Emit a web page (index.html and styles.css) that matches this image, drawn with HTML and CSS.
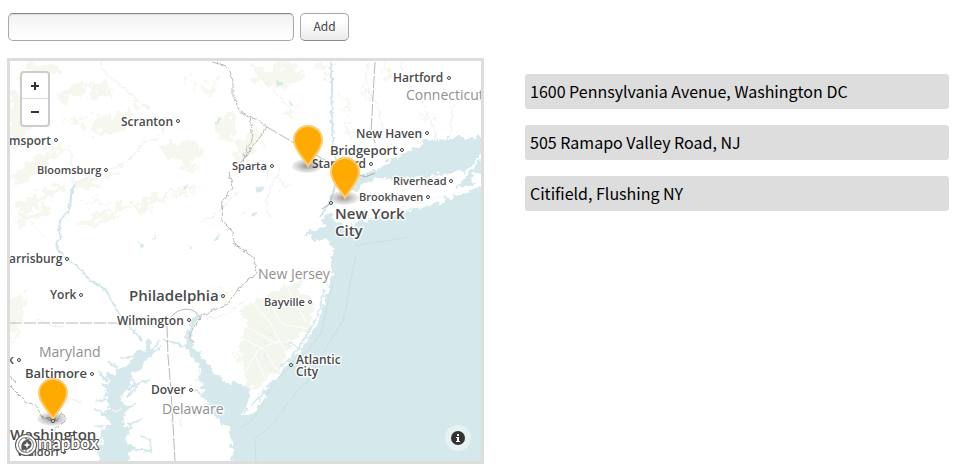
FILE: index.html
```html
<!DOCTYPE html>
<html lang="en">
<head>
<meta charset="utf-8">
<title>Address map</title>
<link rel="stylesheet" href="styles.css">
</head>
<body>
<form class="add-form">
  <input class="address-input" type="text" name="address" aria-label="Address">
  <button class="add-button" type="button">Add</button>
</form>
<main class="content">
  <section class="map" aria-label="Map">
    <svg class="map-canvas" viewBox="10 61 471 400" preserveAspectRatio="xMinYMin slice">
      <defs>
        <filter id="coast" x="-5%" y="-5%" width="110%" height="110%">
          <feTurbulence type="fractalNoise" baseFrequency="0.16" numOctaves="3" seed="4" result="n"/>
          <feDisplacementMap in="SourceGraphic" in2="n" scale="11" xChannelSelector="R" yChannelSelector="G"/>
        </filter>
        <filter id="rough" x="-5%" y="-5%" width="110%" height="110%">
          <feTurbulence type="fractalNoise" baseFrequency="0.12" numOctaves="3" seed="9" result="n"/>
          <feDisplacementMap in="SourceGraphic" in2="n" scale="24" xChannelSelector="R" yChannelSelector="G"/>
        </filter>
        <filter id="wiggle" x="-5%" y="-5%" width="110%" height="110%">
          <feTurbulence type="fractalNoise" baseFrequency="0.2" numOctaves="2" seed="2" result="n"/>
          <feDisplacementMap in="SourceGraphic" in2="n" scale="5" xChannelSelector="R" yChannelSelector="G"/>
        </filter>
        <radialGradient id="shade">
          <stop offset="0" stop-color="#000" stop-opacity=".42"/>
          <stop offset=".5" stop-color="#000" stop-opacity=".22"/>
          <stop offset="1" stop-color="#000" stop-opacity=".05"/>
        </radialGradient>
        <g id="pin">
          <ellipse cx="-1" cy="0" rx="15" ry="7" fill="url(#shade)"/>
          <path class="pin-shape" d="M0 0C-4 -8 -14 -16 -14 -26A14 14 0 0 1 14 -26C14 -16 4 -8 0 0Z"/>
        </g>
      </defs>
      <rect class="land" x="10" y="61" width="471" height="400"/>

      <g class="hills" filter="url(#rough)">
        <path d="M8 85L25 95L32 112L25 140L10 155ZM30 62L60 65L45 80L22 88ZM55 95L82 82L98 79L82 94L62 103ZM86 96L100 84L112 88L104 98ZM95 118L112 112L135 114L128 128L105 136L93 130ZM130 100L155 105L146 112ZM62 118L88 120L80 128ZM185 78L192 73L190 88ZM205 86L216 78L214 94L207 98ZM160 122L176 118L168 126ZM162 145L190 140L205 150L192 162L168 158ZM218 118L234 114L240 130L230 142L218 134ZM175 156L200 166L188 174ZM235 146L256 125L260 138L238 162Z"/>
        <path d="M12 175L48 150L72 146L40 169L14 190ZM72 180L124 168L118 176L78 188ZM15 208L60 182L68 186L22 214ZM77 222L100 214L120 204L132 209L104 219L86 231ZM132 204L175 190L212 184L170 196L140 211ZM20 218L50 204L55 208L24 228ZM80 201L110 201L105 204L80 204Z"/>
        <path d="M252 70L296 62L304 76L284 90L260 84ZM310 65L336 62L326 76ZM244 146L262 132L258 148L242 160ZM284 112L296 108L290 122ZM342 94L350 108L345 116ZM362 84L372 95L366 102ZM385 66L393 75L385 82ZM345 130L354 122L350 138ZM278 178L290 184L283 188ZM424 112L432 116L425 122ZM266 170L275 164L270 178Z"/>
        <path d="M10 300L26 290L22 318L14 335L10 345ZM235 355L242 350L240 362ZM70 400L82 397L77 408ZM198 366L206 376L202 392ZM218 286L232 298L224 302ZM172 418L184 414L180 430Z"/>
      </g>
      <path class="pine" filter="url(#coast)" d="M270 294L285 285L304 279L298 292L312 299L314 310L309 330L293 341L284 358L279 370L266 376L262 386L248 388L244 370L240 345L246 327L242 309L254 301Z"/>

      <g class="streams" filter="url(#wiggle)">
        <path d="M100 63C107 82 121 81 129 94C140 101 154 110 160 122C167 131 164 140 144 142C135 150 136 162 110 168C94 173 82 181 75 185"/>
        <path d="M67 145C76 151 66 161 75 185M370 63C362 73 365 90 378 106C381 122 382 136 395 148M402 62C398 80 420 93 423 104C430 120 437 127 435 142"/>
        <path d="M250 62C258 78 276 92 293 112M280 168C275 182 260 200 270 218M458 102C446 111 456 122 449 138M200 222C220 216 228 200 238 192M14 219C24 207 35 230 45 237"/>
        <path d="M36 320C46 318 51 330 63 326M244 300C228 315 222 319 203 317M256 326C274 337 284 344 294 348M264 340L266 366L282 376"/>
      </g>
      <g class="rivers" filter="url(#wiggle)">
        <path d="M75 185C68 193 73 203 68 212C55 222 60 230 61 239C48 248 67 257 74 264C86 272 87 282 99 285C109 291 114 306 121 318C130 323 135 334 142 341"/>
        <path d="M321 216C328 205 334 196 336 180L336 159C332 151 334 139 332 125C330 104 334 85 331 62"/>
      </g>
      <g class="ponds" filter="url(#wiggle)">
        <path d="M214 124L221 116L218 125ZM182 188L188 184L184 190ZM138 242L145 246L142 248ZM153 239L157 231L154 240ZM214 240L220 233L218 240ZM275 78L283 84L279 86ZM289 98L293 107L290 105ZM256 187L265 188L258 192ZM251 213L257 212L254 217ZM191 245L193 249L190 248ZM243 212L246 213L242 214Z"/>
      </g>

      <g class="water" filter="url(#coast)">
        <path d="M490 182L462 195L440 202L418 209L394 215L366 219L347 226L336 222L330 212L323 220L326 226L304 233L312 239L328 241L332 248L332 275L327 288L323 310L316 326L305 343L291 359L282 372L268 388L261 403L253 414L242 416L248 402L250 388L240 383L228 384L216 374L208 363L197 351L191 341L188 349L189 354L200 367L201 386L206 402L216 416L227 428L232 443L233 475L490 475Z"/>
        <path d="M490 137L471 138L455 136L435 141L424 140L411 150L401 156L390 159L380 168L367 173L356 179L351 186L356 192L364 183L370 183L375 178L391 180L407 178L430 177L450 173L464 172L474 163L482 150L490 146Z"/>
        <path d="M147 339L144 350L136 352L135 359L121 366L114 374L106 374L111 382L100 385L108 391L101 397L109 401L108 412L103 412L110 425L101 432L101 442L97 446L99 474L132 474L128 454L133 449L126 439L130 430L123 422L125 410L131 408L121 402L122 393L132 386L131 374L142 369L145 359L160 351L151 351L153 344Z"/>
        <path d="M194 312L190 324L186 333L187 350L193 352L191 341L190 331L199 319Z"/>
        <path d="M482 156L475 168L467 175L461 183L455 188L463 187L472 183L474 174L484 172Z"/>
      </g>
      <g class="creeks" filter="url(#wiggle)">
        <path d="M160 340L148 355L162 347M136 357L119 357M118 367L107 362M108 382L98 372M106 399L95 402M106 414L94 409M104 426L94 427M127 397L137 387L133 381M123 411L136 403M128 425L142 419M131 449L151 451L150 440L141 435M132 386L150 380M186 346L163 340M202 394L192 389M211 404L195 415"/>
        <path d="M302 342L318 316L324 290M292 357L303 340M252 405L275 380M290 342L302 350M278 368L288 360"/>
      </g>
      <g class="islands" filter="url(#wiggle)">
        <path d="M365 216L410 205L465 190M323 288L316 322L301 348M247 411L261 392L282 366M130 402L123 400M113 411L122 409M351 184L356 187"/>
      </g>
      <g class="sea-lines">
        <path d="M356 255C351 277 348 299 343 321C331 337 320 360 308 381C296 393 288 400 282 412L270 427L255 439L256 461"/>
        <path d="M333 285C326 303 326 318 321 333C313 348 295 362 275 381C262 399 260 418 240 428M355 246C374 242 388 241 409 237"/>
      </g>

      <g class="roads">
        <path d="M242 338L265 350L277 370M240 323L275 343L296 340M252 302L269 321L288 356M267 298L282 324L309 329M256 358L265 378M243 376L258 350L280 340M283 280L295 301L306 322"/>
      </g>
      <g class="borders">
        <g filter="url(#wiggle)">
          <path d="M213 62L227 66L233 81L233 96L239 110L250 117L253 137L243 159L229 173L233 187L223 200L222 221L232 231L233 243L244 250L254 258L257 274L247 280L237 291L227 304L213 310L203 315L196 324L189 336L193 344"/>
          <path d="M240 113L258 120L267 127L252 146L242 162M10 386L24 400L36 406L43 418L57 420L62 413L66 421L54 431M10 376L16 383"/>
        </g>
        <path class="dashed" d="M267 127L296 144L330 163L365 177L375 173M375 62L371 132L376 145M10 323L127 323M167 326L168 356L171 390L173 425L175 461"/>
        <path d="M168 322C175 307 193 305 200 317M322 209L333 202M363 174L365 177L375 173"/>
      </g>

      <g class="labels states">
        <text x="406" y="100">Connecticut</text>
        <text x="258" y="279">New Jersey</text>
        <text x="39" y="357">Maryland</text>
        <text x="162" y="414">Delaware</text>
      </g>
      <g class="labels towns">
        <text x="393" y="82">Hartford</text>
        <text x="121" y="126">Scranton</text>
        <text x="9" y="145">msport</text>
        <text x="356" y="138">New Haven</text>
        <text x="9" y="263">arrisburg</text>
        <text x="50" y="299">York</text>
        <text x="117" y="325">Wilmington</text>
        <text x="296" y="364">Atlantic<tspan x="296" dy="12">City</tspan></text>
        <text x="151" y="394">Dover</text>
        <text x="7" y="364">k</text>
        <text x="312" y="168">Stamford</text>
      </g>
      <g class="labels small">
        <text x="37" y="174">Bloomsburg</text>
        <text x="232" y="170">Sparta</text>
        <text x="393" y="185">Riverhead</text>
        <text x="359" y="201">Brookhaven</text>
        <text x="264" y="306">Bayville</text>
        <text x="17" y="456">Waldorf</text>
      </g>
      <g class="labels medium">
        <text x="330" y="155">Bridgeport</text>
        <text x="25" y="378">Baltimore</text>
      </g>
      <g class="labels large">
        <text x="129" y="301">Philadelphia</text>
        <text x="335" y="219">New York<tspan x="335" dy="17">City</tspan></text>
        <text x="10" y="440">Washington</text>
      </g>
      <g class="dots">
        <circle cx="449" cy="78" r="1.5"/><circle cx="178" cy="121" r="1.5"/>
        <circle cx="56" cy="140" r="1.5"/><circle cx="106" cy="170" r="1.5"/>
        <circle cx="427" cy="133" r="1.5"/><circle cx="402" cy="150" r="1.5"/>
        <circle cx="371" cy="164" r="1.5"/><circle cx="272" cy="166" r="1.5"/>
        <circle cx="451" cy="181" r="1.5"/><circle cx="428" cy="197" r="1.5"/>
        <circle cx="331" cy="203" r="1.5"/><circle cx="67" cy="259" r="1.5"/>
        <circle cx="81" cy="295" r="1.5"/><circle cx="223" cy="296" r="1.5"/>
        <circle cx="189" cy="320" r="1.5"/><circle cx="310" cy="302" r="1.5"/>
        <circle cx="291" cy="365" r="1.5"/><circle cx="92" cy="374" r="1.5"/>
        <circle cx="191" cy="390" r="1.5"/><circle cx="19" cy="360" r="1.5"/>
        <circle cx="53" cy="421" r="1.5"/><circle cx="64" cy="452" r="1.5"/>
      </g>

      <use href="#pin" x="308" y="166"/>
      <use href="#pin" x="345" y="198"/>
      <use href="#pin" x="53" y="419"/>
      <circle class="capital" cx="53" cy="421" r="1.5"/>
    </svg>
    <div class="zoom">
      <button class="zoom-button" type="button" aria-label="Zoom in">
        <svg class="zoom-icon" viewBox="0 0 10 10"><path d="M1 5H9M5 1V9"/></svg>
      </button>
      <button class="zoom-button" type="button" aria-label="Zoom out">
        <svg class="zoom-icon" viewBox="0 0 10 10"><path d="M1 5H9"/></svg>
      </button>
    </div>
    <a class="logo" href="#about" aria-label="Mapbox">
      <svg class="logo-icon" viewBox="0 0 88 24">
        <circle class="logo-outline" cx="12" cy="12" r="9"/>
        <circle class="logo-ring" cx="12" cy="12" r="9"/>
        <path class="logo-drop" d="M8 16.500C6 12 9 7 13 7C16 7 18 9 17.500 12C17 15.500 13 17.500 8 16.500Z"/>
        <path class="logo-star" d="M13 8.500L14 11L16.500 12L14 13L13 15.500L12 13L9.500 12L12 11Z"/>
        <text class="logo-text" x="24" y="16">mapbox</text>
      </svg>
    </a>
    <button class="info" type="button" aria-label="Map information">
      <svg class="info-icon" viewBox="0 0 14 14"><circle cx="7" cy="7" r="7"/><path d="M6 3H8V5H6ZM5 6H8V10H9V11H5V10H6V7H5Z"/></svg>
    </button>
  </section>
  <ul class="addresses">
    <li class="address">1600 Pennsylvania Avenue, Washington DC</li>
    <li class="address">505 Ramapo Valley Road, NJ</li>
    <li class="address">Citifield, Flushing NY</li>
  </ul>
</main>
</body>
</html>
```
FILE: styles.css
```css
* {
  box-sizing: border-box;
}

body {
  margin: 0;
  padding: 13px 5px 12px 7px;
  background: #fff;
  color: #000;
  font-family: "Noto Sans CJK SC", "Noto Sans", sans-serif;
}

.add-form {
  display: flex;
  gap: 6px;
  margin: 0 0 17px 1px;
}

.address-input,
.add-button {
  height: 28px;
  margin: 0;
  border: 1px solid #aaa;
  border-radius: 5px;
  font-family: inherit;
  font-size: 12px;
  line-height: 24px;
  color: #444;
}

.address-input {
  width: 286px;
  padding: 0 8px;
  border-top-color: #888;
  background: linear-gradient(#f2f2f2, #fff);
  box-shadow: inset 0 1px 1px #ddd;
}

.add-button {
  width: 49px;
  padding: 0 0 2px;
  border-bottom-color: #888;
  background: linear-gradient(#fff 30%, #eceaea);
}

.content {
  display: flex;
  align-items: flex-start;
  gap: 41px;
}

.map {
  position: relative;
  flex: none;
  width: 50vw;
  border: 3px solid #ddd;
  overflow: hidden;
}

.map-canvas {
  display: block;
  width: 100%;
}

.land { fill: #fff; }
.hills { fill: #f6f7ef; }
.pine { fill: #f3f6ed; }
.water,
.ponds { fill: #d5e8eb; }
.streams,
.rivers,
.creeks,
.islands,
.roads,
.sea-lines,
.borders {
  fill: none;
}
.streams { stroke: #e5f1f4; }
.rivers { stroke: #cfe4ea; stroke-width: 2; }
.creeks { stroke: #d5e8eb; stroke-width: 2; }
.islands { stroke: #f3f8f8; }
.roads { stroke: #fff; }
.sea-lines { stroke: #cbdfe3; stroke-dasharray: 14 1; }
.borders { stroke: #b9b9b9; }
.dashed { stroke-dasharray: 12 2; }

.labels {
  font-family: "Open Sans", sans-serif;
  font-weight: 600;
  fill: #4b4b4b;
  stroke: #fff;
  stroke-opacity: .8;
  stroke-width: 3px;
  stroke-linejoin: round;
  paint-order: stroke;
}

.states {
  font-size: 14px;
  font-weight: 400;
  fill: #919191;
}

.towns { font-size: 12px; }
.small { font-size: 11px; }
.medium { font-size: 13px; }
.large { font-size: 15px; }

.dots,
.capital {
  fill: #fff;
  stroke: #444;
}

.pin-shape {
  fill: #fa0;
  stroke: #ffca6a;
  stroke-width: 2px;
}

.zoom {
  position: absolute;
  top: 10px;
  left: 10px;
  border: 2px solid #ccc;
  border-radius: 4px;
  background: #fff;
}

.zoom-button {
  display: grid;
  place-items: center;
  width: 26px;
  height: 26px;
  padding: 0;
  border: 0;
  background: none;
}

.zoom-button:first-child {
  border-bottom: 1px solid #ddd;
}

.zoom-icon {
  width: 10px;
  height: 10px;
  fill: none;
  stroke: #333;
  stroke-width: 2px;
}

.logo {
  position: absolute;
  bottom: 4px;
  left: 4px;
}

.logo-icon {
  display: block;
  width: 88px;
  height: 24px;
}

.logo-outline {
  fill: none;
  stroke: #555;
  stroke-width: 4px;
}

.logo-ring {
  fill: #fff;
  fill-opacity: .3;
  stroke: #fff;
  stroke-width: 2px;
}

.logo-drop { fill: #555; }
.logo-star { fill: #fff; }

.logo-text {
  font-family: Lato, sans-serif;
  font-size: 17px;
  font-weight: 700;
  fill: #fff;
  stroke: #555;
  stroke-width: 2px;
  stroke-linejoin: round;
  paint-order: stroke;
}

.info {
  position: absolute;
  right: 10px;
  bottom: 10px;
  display: grid;
  place-items: center;
  width: 26px;
  height: 26px;
  padding: 0;
  border: 0;
  border-radius: 50%;
  background: #e6f1f3;
}

.info-icon {
  width: 14px;
  height: 14px;
  fill: #333;
}

.info-icon path { fill: #fff; }

.addresses {
  flex: 1;
  display: grid;
  gap: 16px;
  margin: 16px 0 0;
  padding: 0;
  list-style: none;
}

.address {
  padding: 5px;
  border-radius: 3px;
  background: #ddd;
  font-size: 16px;
  line-height: 25px;
}
```
